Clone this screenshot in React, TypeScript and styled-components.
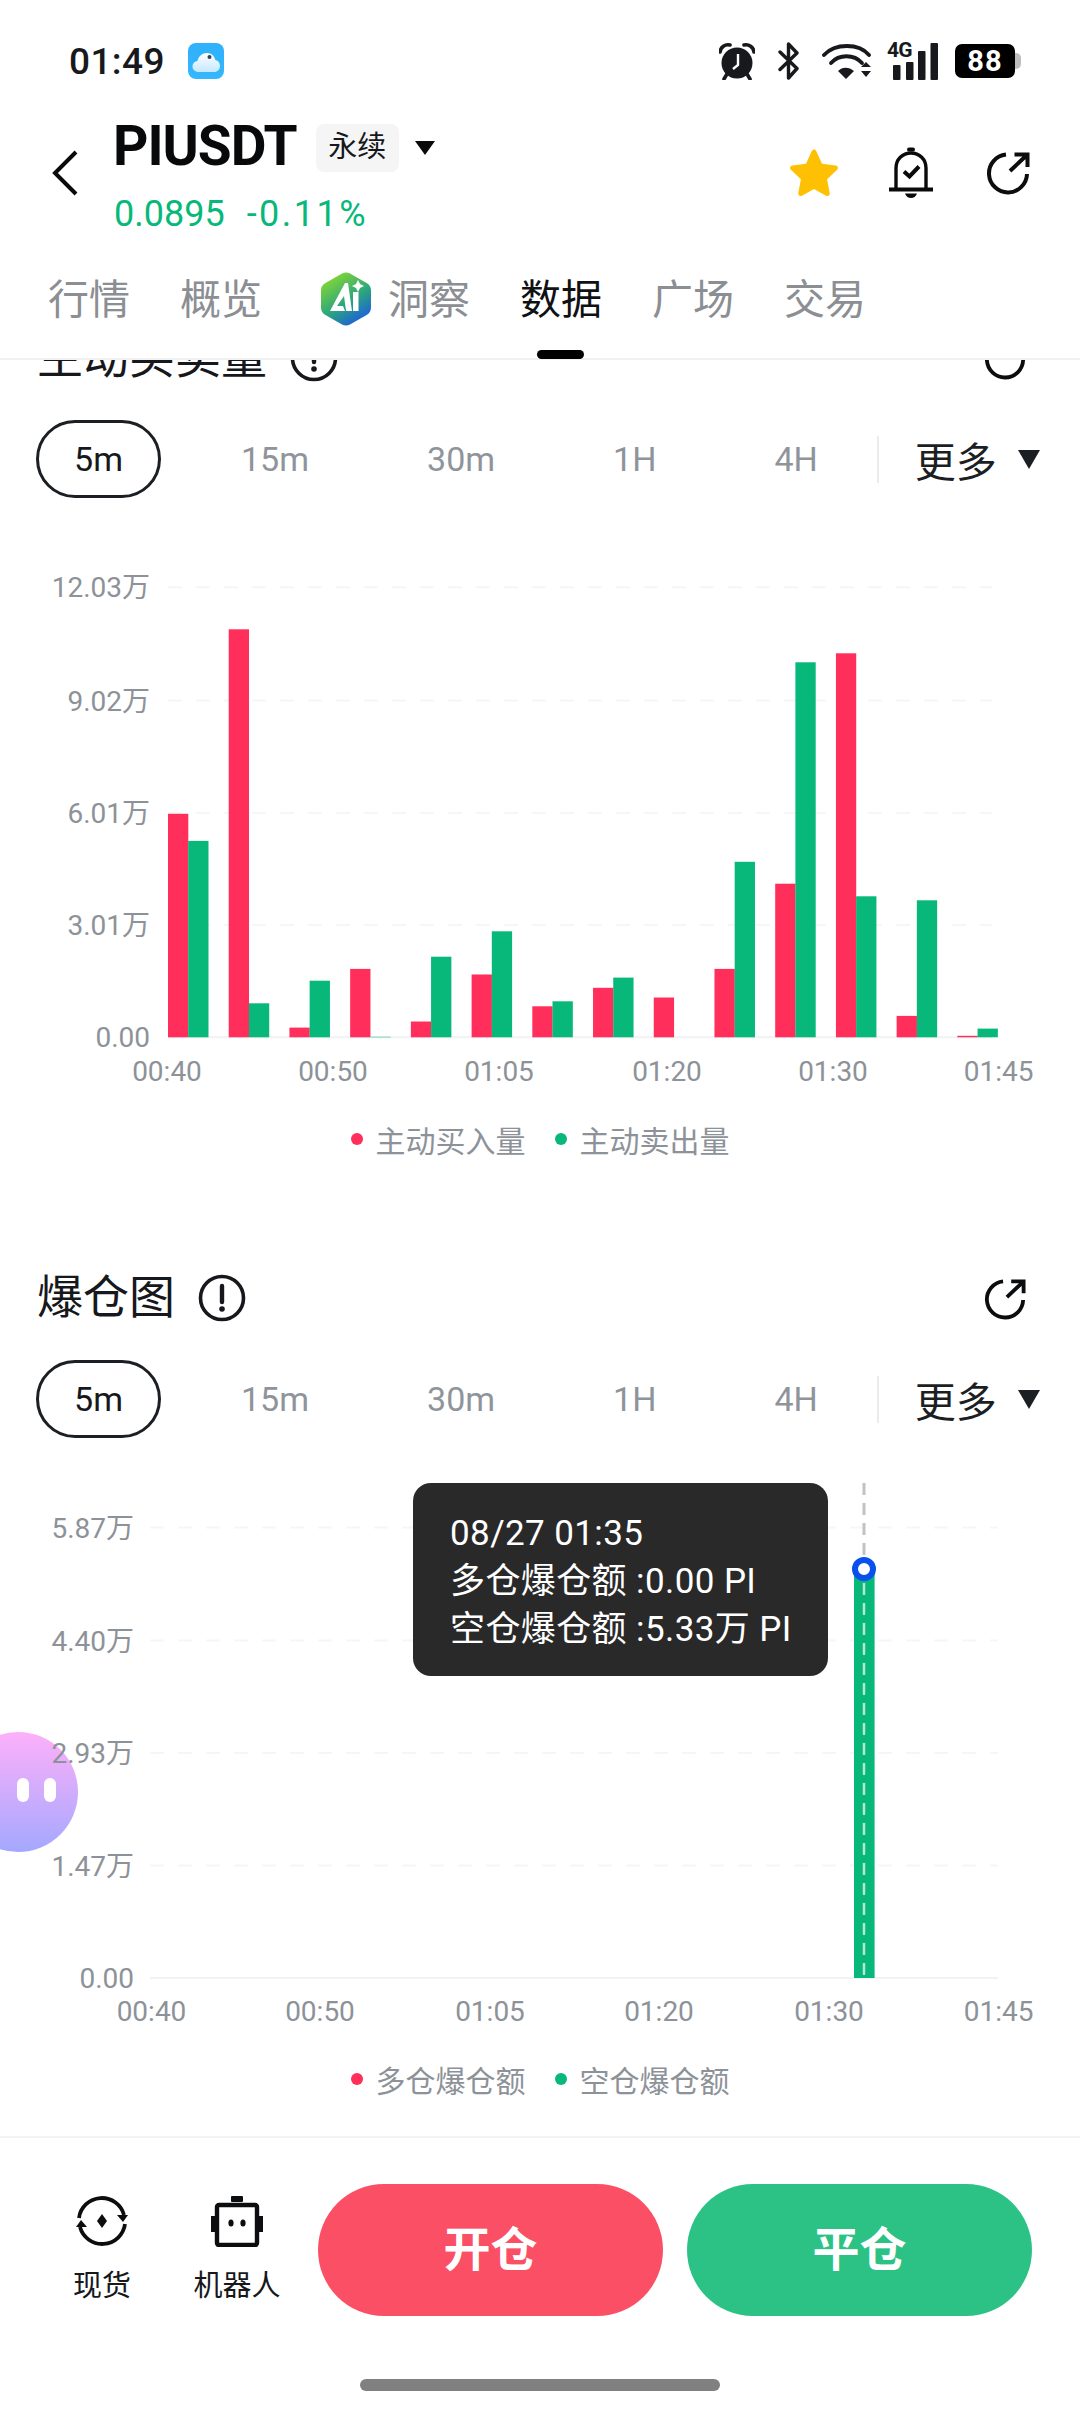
import React from "react";
import styled, { createGlobalStyle } from "styled-components";

const GlobalStyle = createGlobalStyle`
  html, body { margin: 0; padding: 0; background: #fff; }
  body { font-family: Roboto, "Noto Sans CJK SC", sans-serif; }
`;

const FONT = `Roboto, "Noto Sans CJK SC", sans-serif`;
const GREEN = "#07b87a";
const PINK = "#ff2e5b";
const MUTED = "#8d9299";

const Page = styled.div`
  position: relative;
  width: 1080px;
  height: 2412px;
  display: flex;
  flex-direction: column;
  overflow: hidden;
  background: #fff;
  color: #16181c;
`;

/* status bar */
const StatusBar = styled.div`
  height: 122px;
  flex: none;
  display: flex;
  align-items: center;
  padding: 0 59px 0 69px;
`;
const Clock = styled.span`
  font-size: 37px;
  font-weight: 500;
  color: #17191c;
  letter-spacing: 0.4px;
`;
const AppBadge = styled.svg`
  width: 36px;
  height: 36px;
  margin-left: 23px;
`;
const StatusIcons = styled.div`
  margin-left: auto;
  display: flex;
  align-items: center;
`;
const NetGroup = styled.div`
  position: relative;
  width: 51px;
  height: 38px;
  margin-left: 14px;
`;
const NetLabel = styled.span`
  position: absolute;
  left: 0;
  top: -3px;
  font-size: 21px;
  line-height: 22px;
  font-weight: 700;
  letter-spacing: -0.8px;
  color: #17191c;
`;
const Battery = styled.div`
  position: relative;
  width: 60px;
  height: 34px;
  margin-left: 17px;
  margin-right: 6px;
  border-radius: 7px;
  background: #000;
  color: #fff;
  font-size: 29px;
  font-weight: 700;
  line-height: 34px;
  text-align: center;
  letter-spacing: 1px;
  &::after {
    content: "";
    position: absolute;
    left: 60px;
    top: 9px;
    width: 6px;
    height: 16px;
    border-radius: 0 5px 5px 0;
    background: #bdbdbd;
  }
`;

/* title */
const TitleRow = styled.div`
  height: 120px;
  flex: none;
  display: flex;
  align-items: flex-start;
  padding: 0 50px 0 52px;
`;
const BackIcon = styled.svg`
  width: 26px;
  height: 46px;
  margin-top: 28px;
`;
const NameColumn = styled.div`
  margin-left: 35px;
  display: flex;
  flex-direction: column;
`;
const NameLine = styled.div`
  display: flex;
  align-items: center;
  height: 52px;
`;
const Symbol = styled.span`
  font-size: 55px;
  font-weight: 700;
  letter-spacing: -1px;
  color: #08090a;
  margin-top: -4px;
`;
const KindTag = styled.span`
  margin-left: 19px;
  width: 83px;
  height: 48px;
  border-radius: 8px;
  background: #f5f5f5;
  font-size: 29px;
  line-height: 46px;
  text-align: center;
  color: #16181c;
`;
const Caret = styled.i<{ $w: number; $h: number; $color?: string }>`
  display: inline-block;
  width: 0;
  height: 0;
  border-left: ${(p) => p.$w / 2}px solid transparent;
  border-right: ${(p) => p.$w / 2}px solid transparent;
  border-top: ${(p) => p.$h}px solid ${(p) => p.$color || "#0a0a0a"};
`;
const TagCaret = styled(Caret)`
  margin-left: 16px;
`;
const PriceLine = styled.div`
  display: flex;
  gap: 22px;
  margin-top: 20px;
  padding-left: 1px;
  font-size: 36px;
  line-height: 40px;
  color: ${GREEN};
`;
const Change = styled.span`
  letter-spacing: 2.5px;
`;
const Actions = styled.div`
  margin-left: auto;
  margin-top: 25px;
  display: flex;
  align-items: center;
  height: 52px;
`;
const StarIcon = styled.svg`
  width: 52px;
  height: 50px;
`;
const BellIcon = styled.svg`
  width: 46px;
  height: 52px;
  margin-left: 48px;
`;
const ShareIcon = styled.svg<{ $size: number; $left?: number }>`
  width: ${(p) => p.$size}px;
  height: ${(p) => p.$size}px;
  margin-left: ${(p) => p.$left || 0}px;
`;

/* tabs */
const Tabs = styled.div`
  height: 118px;
  flex: none;
  box-sizing: border-box;
  display: flex;
  gap: 50px;
  padding: 31px 0 0 48px;
  border-bottom: 2px solid #f1f1f1;
`;
const Tab = styled.div<{ $active?: boolean }>`
  position: relative;
  height: 54px;
  font-size: 41px;
  line-height: 54px;
  color: ${(p) => (p.$active ? "#0f1114" : "#8b8e93")};
`;
const TabMark = styled.span`
  position: absolute;
  left: 17px;
  top: 77px;
  width: 47px;
  height: 9px;
  border-radius: 5px;
  background: #000;
`;
const InsightTab = styled(Tab)`
  display: flex;
  gap: 17px;
  margin-left: 9px;
`;
const HexLogo = styled.svg`
  width: 50px;
  height: 54px;
  margin-top: -1px;
`;

/* scrolled content */
const Scroller = styled.div`
  position: relative;
  z-index: 1;
  flex: 1;
  min-height: 0;
  overflow: hidden;
`;
const ScrollBody = styled.div`
  margin-top: -33px;
`;
const Section = styled.section<{ $pad?: number }>`
  padding-bottom: ${(p) => p.$pad || 0}px;
`;
const SectionHead = styled.div`
  height: 60px;
  display: flex;
  align-items: center;
  padding: 0 54px 0 37px;
`;
const SectionTitle = styled.h2`
  margin: 0;
  font-size: 46px;
  line-height: 60px;
  font-weight: 400;
  color: #16181c;
`;
const InfoIcon = styled.svg`
  width: 48px;
  height: 48px;
  margin: 2px 0 0 23px;
`;
const HeadShare = styled.div`
  margin: 3px 0 0 auto;
  display: flex;
`;
const RangeRow = styled.div`
  margin-top: 33px;
  height: 78px;
  display: flex;
  align-items: center;
  padding-left: 36px;
`;
const ActiveRange = styled.div`
  box-sizing: border-box;
  width: 125px;
  height: 78px;
  margin-right: 21px;
  border: 3px solid #1b1e23;
  border-radius: 39px;
  font-size: 34px;
  line-height: 72px;
  text-align: center;
  color: #16181c;
`;
const Range = styled.div`
  padding: 0 59px;
  font-size: 34px;
  color: #8f949b;
`;
const RangeDivider = styled.span`
  width: 2px;
  height: 47px;
  background: #e9ebee;
`;
const More = styled.div`
  margin-left: 36px;
  display: flex;
  align-items: center;
  gap: 21px;
  font-size: 41px;
  color: #1b1e23;
`;
const ChartBox = styled.div`
  position: relative;
  height: 600px;
`;
const ChartSvg = styled.svg`
  display: block;
  width: 1080px;
  height: 600px;
`;
const AxisText = styled.text`
  font-family: ${FONT};
  font-size: 28px;
  fill: ${MUTED};
`;
const Legend = styled.div`
  margin-top: 21px;
  height: 40px;
  display: flex;
  justify-content: center;
  gap: 29px;
`;
const LegendItem = styled.div`
  display: flex;
  align-items: center;
  gap: 13px;
  font-size: 30px;
  color: ${MUTED};
`;
const Dot = styled.i<{ $color: string }>`
  width: 12px;
  height: 12px;
  border-radius: 50%;
  background: ${(p) => p.$color};
`;
const Tip = styled.div`
  position: absolute;
  left: 413px;
  top: 45px;
  box-sizing: border-box;
  width: 415px;
  height: 193px;
  padding: 27px 0 0 37px;
  border-radius: 18px;
  background: #292929;
  color: #fff;
  font-size: 35px;
  line-height: 48px;
  letter-spacing: 0.4px;
  white-space: nowrap;
`;

/* floating helper, sits under the axis labels */
const Bubble = styled.div`
  position: absolute;
  left: -42px;
  top: 1732px;
  width: 120px;
  height: 120px;
  border-radius: 50%;
  background: linear-gradient(180deg, #fdb0fa 0%, #a4a8ff 100%);
`;
const Eye = styled.i<{ $left: number }>`
  position: absolute;
  left: ${(p) => p.$left}px;
  top: 46px;
  width: 12px;
  height: 24px;
  border-radius: 6px;
  background: #fff;
`;

/* bottom bar */
const BottomBar = styled.div`
  position: relative;
  z-index: 1;
  height: 276px;
  flex: none;
  box-sizing: border-box;
  border-top: 2px solid #f3f3f3;
  display: flex;
  flex-direction: column;
`;
const ActionRow = styled.div`
  display: flex;
  align-items: center;
  height: 132px;
  margin-top: 46px;
  padding-left: 68px;
`;
const ToolItem = styled.div<{ $width: number; $left?: number }>`
  width: ${(p) => p.$width}px;
  margin-left: ${(p) => p.$left || 0}px;
  display: flex;
  flex-direction: column;
  align-items: center;
  font-size: 29px;
  line-height: 40px;
  color: #16181c;
`;
const ToolIcon = styled.svg`
  width: 54px;
  height: 52px;
  margin-bottom: 19px;
`;
const Trade = styled.div<{ $color: string; $left: number }>`
  width: 345px;
  height: 132px;
  margin-left: ${(p) => p.$left}px;
  border-radius: 66px;
  background: ${(p) => p.$color};
  color: #fff;
  font-size: 47px;
  font-weight: 700;
  line-height: 132px;
  text-align: center;
`;
const HomeBar = styled.div`
  width: 360px;
  height: 12px;
  margin: 63px auto 0;
  border-radius: 6px;
  background: #808080;
`;

const BUY = [223.5, 408, 9.7, 68.4, 15.8, 62.8, 31, 49.5, 39.8, 68.4, 153.6, 384, 21.4, 1.5];
const SELL = [196.4, 34, 56.6, 0.5, 80.6, 106, 36, 59.7, 0, 175.5, 375, 141, 137, 8.7];
const TIMES = ["00:40", "00:50", "01:05", "01:20", "01:30", "01:45"];

const Arrow = ({ size, left }: { size: number; left?: number }) => (
  <ShareIcon $size={size} $left={left} viewBox="0 0 44 44" fill="none" stroke="#0c0d0f" strokeWidth="4">
    <path d="M20 3.5A19 19 0 1 0 41 23" />
    <path d="M24 20 41 4M28.5 3.5H41.5V16" />
  </ShareIcon>
);

const SectionHeader = ({ title }: { title: string }) => (
  <SectionHead>
    <SectionTitle>{title}</SectionTitle>
    <InfoIcon viewBox="0 0 48 48" fill="none">
      <circle cx="24" cy="24" r="21.5" stroke="#16181c" strokeWidth="3.6" />
      <path d="M24 12v16" stroke="#16181c" strokeWidth="4.4" strokeLinecap="round" />
      <circle cx="24" cy="35" r="2.8" fill="#16181c" />
    </InfoIcon>
    <HeadShare>
      <Arrow size={42} />
    </HeadShare>
  </SectionHead>
);

const RangeBar = () => (
  <RangeRow>
    <ActiveRange>5m</ActiveRange>
    {["15m", "30m", "1H", "4H"].map((r) => (
      <Range key={r}>{r}</Range>
    ))}
    <RangeDivider />
    <More>
      更多
      <Caret $w={22} $h={19} $color="#1b1e23" />
    </More>
  </RangeRow>
);

const Grid = ({ rows, from, to, base }: { rows: number[]; from: number; to: number; base: number }) => (
  <g>
    {rows.map((y) => (
      <line key={y} x1={from} x2={to} y1={y} y2={y} stroke="#f6f6f8" strokeWidth="2" strokeDasharray="14 14" />
    ))}
    <line x1={from} x2={to} y1={base} y2={base} stroke="#f1f2f4" strokeWidth="2" />
  </g>
);

const YLabels = ({ items, right }: { items: [string, number][]; right: number }) => (
  <g>
    {items.map(([label, y]) => (
      <AxisText key={label} x={right} y={y + 10} textAnchor="end">
        {label}
      </AxisText>
    ))}
  </g>
);

const XLabels = ({ centers, y }: { centers: number[]; y: number }) => (
  <g>
    {TIMES.map((t, i) => (
      <AxisText key={t} x={centers[i]} y={y} textAnchor="middle">
        {t}
      </AxisText>
    ))}
  </g>
);

const VolumeChart = () => (
  <ChartBox>
    <ChartSvg viewBox="0 0 1080 600">
      <Grid rows={[89.3, 202.6, 315, 427]} from={168} to={992} base={539.3} />
      <YLabels
        right={150}
        items={[
          ["12.03万", 89.3],
          ["9.02万", 202.6],
          ["6.01万", 315],
          ["3.01万", 427],
          ["0.00", 539.3],
        ]}
      />
      {BUY.map((h, i) => (
        <rect key={i} x={168 + i * 60.72} y={539.3 - h} width="20.3" height={h} fill={PINK} />
      ))}
      {SELL.map((h, i) => (
        <rect key={i} x={188.2 + i * 60.72} y={539.3 - h} width="20.3" height={h} fill={GREEN} />
      ))}
      <XLabels centers={[167, 333, 499, 667, 833, 998.6]} y={583} />
    </ChartSvg>
  </ChartBox>
);

const LiquidationChart = () => (
  <ChartBox>
    <ChartSvg viewBox="0 0 1080 600">
      <Grid rows={[89.6, 202.6, 315, 427.5]} from={150} to={998} base={540} />
      <YLabels
        right={134}
        items={[
          ["5.87万", 89.6],
          ["4.40万", 202.6],
          ["2.93万", 315],
          ["1.47万", 427.5],
          ["0.00", 540],
        ]}
      />
      <rect x="854" y="131" width="20.6" height="409" fill={GREEN} />
      <line x1="864" x2="864" y1="45" y2="131" stroke="#bfc2c6" strokeWidth="3" strokeDasharray="12 8" />
      <line x1="864" x2="864" y1="145" y2="540" stroke="#b4e8d4" strokeWidth="2.5" strokeDasharray="12 8" />
      <circle cx="864" cy="131" r="9" fill="#fff" stroke="#0a50ee" strokeWidth="6" />
      <XLabels centers={[151.5, 320, 490, 659, 829, 998.6]} y={583} />
    </ChartSvg>
    <Tip>
      <div>08/27 01:35</div>
      <div>多仓爆仓额 :0.00 PI</div>
      <div>空仓爆仓额 :5.33万 PI</div>
    </Tip>
  </ChartBox>
);

const ChartLegend = ({ a, b }: { a: string; b: string }) => (
  <Legend>
    <LegendItem>
      <Dot $color={PINK} />
      {a}
    </LegendItem>
    <LegendItem>
      <Dot $color={GREEN} />
      {b}
    </LegendItem>
  </Legend>
);

export default function App() {
  return (
    <Page>
      <GlobalStyle />
      <StatusBar>
        <Clock>01:49</Clock>
        <AppBadge viewBox="0 0 36 36">
          <defs>
            <linearGradient id="badge" x1="0" y1="0" x2="0" y2="1">
              <stop offset="0" stopColor="#2fb1fb" />
              <stop offset="1" stopColor="#35b7fd" />
            </linearGradient>
            <linearGradient id="cloud" x1="0" y1="0" x2="0" y2="1">
              <stop offset="0" stopColor="#fff" />
              <stop offset="1" stopColor="#c5e8fd" />
            </linearGradient>
          </defs>
          <rect width="36" height="36" rx="8" fill="url(#badge)" />
          <path
            d="M11 29c-4 0-6.500-2.500-6.500-5.500 0-3 2-5 5-5.400C10.500 13 14.500 10 19 10c4.500 0 7.500 3 8.300 7 3 .6 4.700 3 4.700 6 0 3.500-2.500 6-6 6Z"
            fill="url(#cloud)"
          />
          <circle cx="21.500" cy="14" r="2" fill="#345" />
        </AppBadge>
        <StatusIcons>
          <svg width="36" height="38" viewBox="0 0 36 38">
            <circle cx="18" cy="21" r="15.500" fill="#17191c" />
            <path d="M1 10a8 8 0 0 1 10-7M35 10a8 8 0 0 0-10-7" fill="none" stroke="#17191c" strokeWidth="3.600" strokeLinecap="round" />
            <path d="M8 32 5 37M28 32l3 5" stroke="#17191c" strokeWidth="3.600" strokeLinecap="round" />
            <path d="M19 12v11l-5 4" fill="none" stroke="#fff" strokeWidth="2.400" />
          </svg>
          <svg width="22" height="38" viewBox="0 0 22 38" style={{ marginLeft: 23 }}>
            <path d="M2 10 19 26.500 10.500 36V2L19 11 2 27.500" fill="none" stroke="#17191c" strokeWidth="3.400" strokeLinejoin="round" strokeLinecap="round" />
          </svg>
          <svg width="51" height="38" viewBox="0 0 51 38" style={{ marginLeft: 22 }} fill="none" stroke="#17191c" strokeLinecap="round">
            <path d="M2 13C13 1 37 1 47 13" strokeWidth="3.800" />
            <path d="M9 21C17 12 32 12 40 21" strokeWidth="3.800" />
            <path d="M16 29c4-4.500 11-4.500 16 0l-8 8Z" fill="#17191c" stroke="none" />
            <path d="M39 25l5-5 5 5ZM39 29l5 6 5-6Z" fill="#17191c" stroke="none" />
          </svg>
          <NetGroup>
            <NetLabel>4G</NetLabel>
            <svg width="51" height="38" viewBox="0 0 51 38">
              <rect x="6" y="23" width="7.500" height="15" rx="1" fill="#17191c" />
              <rect x="19" y="20" width="7.500" height="18" rx="1" fill="#17191c" />
              <rect x="31" y="9" width="7.500" height="29" rx="1" fill="#17191c" />
              <rect x="43.500" y="1" width="7.500" height="37" rx="1" fill="#17191c" />
            </svg>
          </NetGroup>
          <Battery>88</Battery>
        </StatusIcons>
      </StatusBar>

      <TitleRow>
        <BackIcon viewBox="0 0 26 46" fill="none">
          <path d="M24 2 3 23l21 21" stroke="#0a0a0a" strokeWidth="4" />
        </BackIcon>
        <NameColumn>
          <NameLine>
            <Symbol>PIUSDT</Symbol>
            <KindTag>永续</KindTag>
            <TagCaret $w={20} $h={14} />
          </NameLine>
          <PriceLine>
            <span>0.0895</span>
            <Change>-0.11%</Change>
          </PriceLine>
        </NameColumn>
        <Actions>
          <StarIcon viewBox="0 0 52 50">
            <path
              d="M26 1.500c1 0 1.800.6 2.300 1.700l5.700 12.500 13.600 1.700c2.300.3 3.100 2.700 1.500 4.300l-10 9.500 2.600 13.800c.4 2.200-1.800 3.800-3.700 2.700L26 41l-12 6.700c-1.900 1.100-4.100-.5-3.700-2.700l2.600-13.800-10-9.500c-1.600-1.600-.8-4 1.500-4.300l13.600-1.700 5.700-12.500C24.200 2.100 25 1.500 26 1.500Z"
              fill="#fec003"
            />
          </StarIcon>
          <BellIcon viewBox="0 0 46 52" fill="none" stroke="#0a0a0a">
            <path d="M8 42V21C8 12.500 14.500 6 23 6s15 6.500 15 15v21" strokeWidth="3.400" />
            <path d="M1 42.500h44" strokeWidth="4" />
            <path d="M21 2.500h4" strokeWidth="4" strokeLinecap="round" />
            <path d="M16 24.500l5.500 5L31 19.500" strokeWidth="4" />
            <path d="M17 46.500h12c-1 3-3.500 4.500-6 4.500s-5-1.500-6-4.500Z" fill="#0a0a0a" stroke="none" />
          </BellIcon>
          <Arrow size={44} left={52} />
        </Actions>
      </TitleRow>

      <Tabs>
        <Tab>行情</Tab>
        <Tab>概览</Tab>
        <InsightTab>
          <HexLogo viewBox="0 0 50 54">
            <defs>
              <linearGradient id="hex" x1="0.2" y1="0" x2="0.8" y2="1">
                <stop offset="0" stopColor="#8ddb2e" />
                <stop offset="0.55" stopColor="#2ba67c" />
                <stop offset="1" stopColor="#1a55ea" />
              </linearGradient>
            </defs>
            <path
              d="M21 1.500c2.500-1.400 5.500-1.400 8 0l17 9.800c2.500 1.400 4 4 4 6.900v17.600c0 2.900-1.500 5.500-4 6.900l-17 9.800c-2.500 1.400-5.500 1.400-8 0l-17-9.800c-2.500-1.400-4-4-4-6.900V18.200c0-2.900 1.500-5.500 4-6.900Z"
              fill="url(#hex)"
            />
            <path d="M9 39 24 11h3l4 28h-6l-2-15-7 10h6l2 5Z" fill="#fff" />
            <path d="M32 20h5.500v19H32Z" fill="#fff" />
            <path d="M37 8l2 4 4 2-4 2-2 4-2-4-4-2 4-2Z" fill="#fff" />
          </HexLogo>
          洞察
        </InsightTab>
        <Tab $active>
          数据
          <TabMark />
        </Tab>
        <Tab>广场</Tab>
        <Tab>交易</Tab>
      </Tabs>

      <Scroller>
        <ScrollBody>
          <Section $pad={108}>
            <SectionHeader title="主动买卖量" />
            <RangeBar />
            <VolumeChart />
            <ChartLegend a="主动买入量" b="主动卖出量" />
          </Section>
          <Section>
            <SectionHeader title="爆仓图" />
            <RangeBar />
            <LiquidationChart />
            <ChartLegend a="多仓爆仓额" b="空仓爆仓额" />
          </Section>
        </ScrollBody>
      </Scroller>

      <BottomBar>
        <ActionRow>
          <ToolItem $width={68}>
            <ToolIcon viewBox="0 0 54 52" fill="none" stroke="#0c0d0f">
              <path d="M4 23A23 23 0 0 1 49 20" strokeWidth="3.800" />
              <path d="M50 29A23 23 0 0 1 5 32" strokeWidth="3.800" />
              <path d="M42 20h11l-5 7Z" fill="#0c0d0f" stroke="none" />
              <path d="M1 32h11l-6-7Z" fill="#0c0d0f" stroke="none" />
              <path d="M27 19l5 7-5 7-5-7Z" fill="#0c0d0f" stroke="none" />
            </ToolIcon>
            现货
          </ToolItem>
          <ToolItem $width={88} $left={57}>
            <ToolIcon viewBox="0 0 54 52">
              <rect x="21" y="1" width="12" height="6" rx="1" fill="#0c0d0f" />
              <rect x="7" y="10" width="40" height="40" rx="2" fill="none" stroke="#0c0d0f" strokeWidth="4.400" />
              <rect x="1" y="21" width="4" height="16" fill="#0c0d0f" />
              <rect x="49" y="21" width="4" height="16" fill="#0c0d0f" />
              <ellipse cx="21" cy="28" rx="2.600" ry="3.600" fill="#0c0d0f" />
              <ellipse cx="33" cy="28" rx="2.600" ry="3.600" fill="#0c0d0f" />
            </ToolIcon>
            机器人
          </ToolItem>
          <Trade $color="#fa4f64" $left={37}>开仓</Trade>
          <Trade $color="#2cc285" $left={24}>平仓</Trade>
        </ActionRow>
        <HomeBar />
      </BottomBar>

      <Bubble>
        <Eye $left={59} />
        <Eye $left={86} />
      </Bubble>
    </Page>
  );
}
